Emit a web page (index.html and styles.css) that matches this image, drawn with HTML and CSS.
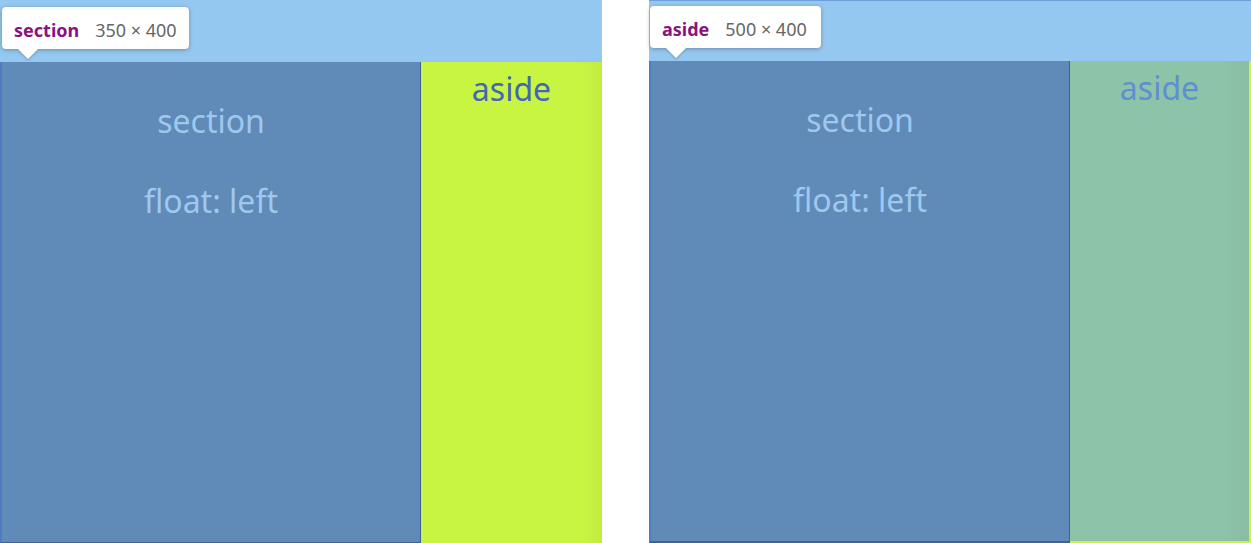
FILE: index.html
```html
<!DOCTYPE html>
<html>
<head>
<meta charset="utf-8">
<link rel="stylesheet" href="styles.css">
</head>
<body>
<div class="stage">
  <div class="panel panel-left">
    <div class="bar"></div>
    <div class="row">
      <div class="section"><div class="big">section</div><div class="big">float: left</div></div>
      <div class="aside aside-lime"><div class="big">aside</div></div>
    </div>
    <div class="tip tip-left"><span class="tag">section</span><span class="dim">350 × 400</span></div>
  </div>
  <div class="panel panel-right">
    <div class="bar"></div>
    <div class="row">
      <div class="section"><div class="big">section</div><div class="big">float: left</div></div>
      <div class="aside aside-green"><div class="big">aside</div></div>
    </div>
    <div class="tip tip-right"><span class="tag">aside</span><span class="dim">500 × 400</span></div>
  </div>
</div>
</body>
</html>
```
FILE: styles.css
```css
html, body {
  margin: 0;
  padding: 0;
  background: #ffffff;
  font-family: "Noto Sans", "Open Sans", sans-serif;
}
.stage {
  display: flex;
  gap: 47px;
  width: 1251px;
  height: 543px;
  overflow: hidden;
}
.panel {
  position: relative;
  width: 602px;
  display: flex;
  flex-direction: column;
}
.panel-right {
  border-top: 1px solid #6e9fd8;
}
.bar {
  height: 62px;
  background: #95c8f0;
}
.panel-right .bar {
  height: 60px;
}
.row {
  display: flex;
  flex: 1;
}
.section {
  width: 421px;
  background: #608ab8;
  border-right: 1px solid #3f5f95;
  border-left: 2px solid #4f7cc0;
  box-sizing: border-box;
  display: flex;
  flex-direction: column;
  align-items: center;
  padding-top: 37px;
  gap: 36px;
  color: #9ec8ee;
}
.panel-left .section {
  border-bottom: 1px solid #44608f;
}
.panel-right .section {
  width: 421px;
  border-bottom: 2px solid #44608f;
}
.big {
  font-size: 32px;
  line-height: 44px;
}
.aside {
  flex: 1;
  display: flex;
  flex-direction: column;
  align-items: center;
  padding-top: 5px;
}
.aside-lime {
  background: linear-gradient(to right, #c8f542 88%, #c4ec40 100%);
  color: #4565b5;
}
.aside-green {
  background: linear-gradient(to right, #8dc3a8 85%, #8abda4 100%);
  color: #5f8ed2;
  border-bottom: 2px solid #c8f542;
  border-right: 2px solid #c8f542;
}
.tip {
  position: absolute;
  height: 42px;
  background: #ffffff;
  border-radius: 4px;
  box-shadow: 0 1px 4px rgba(0, 0, 0, 0.3);
  display: flex;
  align-items: center;
  padding: 3px 12px 0;
  gap: 16px;
  font-size: 18px;
  box-sizing: border-box;
}
.tip::after {
  content: "";
  position: absolute;
  top: 42px;
  left: 16px;
  border-left: 10px solid transparent;
  border-right: 10px solid transparent;
  border-top: 10px solid #ffffff;
  filter: drop-shadow(0 2px 1px rgba(0, 0, 0, 0.15));
}
.tip-left {
  left: 2px;
  top: 7px;
  width: 187px;
}
.tip-right {
  left: 1px;
  top: 5px;
  width: 171px;
}
.tag {
  color: #881280;
  font-weight: 700;
}
.dim {
  color: #666666;
}
```
